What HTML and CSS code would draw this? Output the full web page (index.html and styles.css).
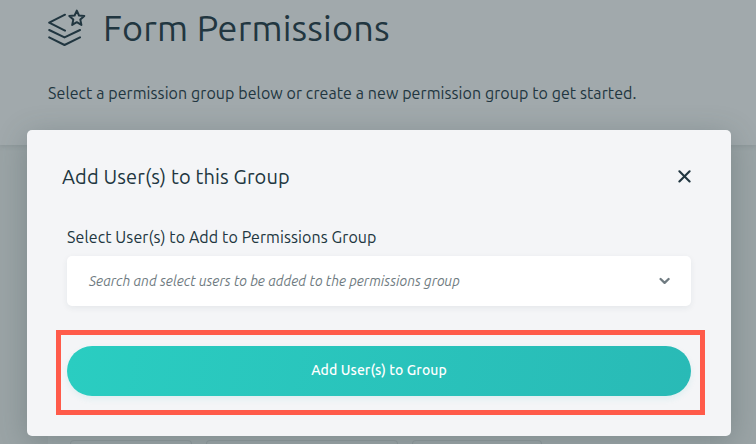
FILE: index.html
```
<!DOCTYPE html>
<html lang="en">
<head>
<meta charset="utf-8">
<title>Form Permissions</title>
<link rel="stylesheet" href="styles.css">
</head>
<body>
<div class="page">
  <header class="page-header">
    <div class="title-row">
      <svg class="title-icon" viewBox="0 0 38 38" fill="none" stroke="#213640" stroke-width="2" stroke-linecap="round" stroke-linejoin="round">
        <path d="M17 5.7 1.2 13.7 17 21.6"/>
        <path d="M1.2 21 16.5 28.4 32 21"/>
        <path d="M1.2 28.4 16.5 36 32 28.4"/>
        <path d="M28.8 1.6l2.2 4.9 5.3.5-4 3.6 1.1 5.3-4.6-2.7-4.6 2.7 1.1-5.3-4-3.6 5.3-.5z"/>
      </svg>
      <h1 class="title">Form Permissions</h1>
    </div>
    <p class="intro">Select a permission group below or create a new permission group to get started.</p>
  </header>
  <main class="page-body">
    <section class="card">
      <div class="chip chip-a"></div>
      <div class="chip chip-b"></div>
      <div class="chip chip-c"></div>
    </section>
  </main>
</div>
<div class="modal" role="dialog" aria-labelledby="modal-title">
  <div class="modal-head">
    <h2 class="modal-title" id="modal-title">Add User(s) to this Group</h2>
    <button class="close" aria-label="Close">
      <svg width="14" height="14" viewBox="0 0 14 14" fill="none" stroke="#213640" stroke-width="2.1" stroke-linecap="round"><path d="M2.4 2.3 12.6 12.5M12.6 2.3 2.4 12.5"/></svg>
    </button>
  </div>
  <div class="field">
    <label class="label">Select User(s) to Add to Permissions Group</label>
    <div class="select">
      <span class="placeholder">Search and select users to be added to the permissions group</span>
      <svg width="12" height="8" viewBox="0 0 12 8" fill="none" stroke="#6f7b81" stroke-width="2.3" stroke-linecap="round" stroke-linejoin="round"><path d="M1.6 2 5.6 5.9 9.6 2"/></svg>
    </div>
  </div>
  <div class="action">
    <button class="submit">Add User(s) to Group</button>
    <div class="highlight"></div>
  </div>
</div>
</body>
</html>
```
FILE: styles.css
```
* { box-sizing: border-box; }
body {
  margin: 0;
  height: 444px;
  overflow: hidden;
  position: relative;
  font-family: Ubuntu, "Noto Sans", sans-serif;
  color: #213640;
}
h1, h2, p { margin: 0; font-weight: 400; white-space: nowrap; }
button { border: 0; padding: 0; font-family: inherit; }
.page { height: 444px; display: flex; flex-direction: column; background: #9ba4a6; }
.page-header {
  height: 145px;
  flex: none;
  padding: 9px 48px 0;
  background: #a1a9ac;
  box-shadow: 0 1px 5px rgba(60, 80, 84, .18);
  z-index: 1;
}
.title-row { display: flex; align-items: center; height: 38px; gap: 17px; }
.title-icon { width: 38px; height: 38px; flex: none; }
.title { font-size: 36px; line-height: 38px; letter-spacing: .15px; }
.intro { margin-top: 34px; font-size: 16px; line-height: 24px; letter-spacing: .08px; }
.page-body { flex: 1; display: flex; padding: 36px 46px 0 48px; }
.card {
  flex: 1;
  padding: 259px 22px 0;
  display: flex;
  gap: 14px;
  background: #9fa8aa;
}
.chip {
  height: 4px;
  flex: none;
  border: 1px solid #939c9f;
  border-bottom: 0;
  border-radius: 4px 4px 0 0;
}
.chip-a { width: 122px; }
.chip-b { width: 192px; }
.chip-c { width: 130px; }
.modal {
  position: absolute;
  z-index: 2;
  left: 27px;
  top: 130px;
  width: 704px;
  height: 306px;
  padding: 32px 40px 40px;
  border-radius: 5px;
  background: #f4f5f7;
  box-shadow: 0 6px 30px rgba(50, 68, 73, .3);
}
.modal-head {
  display: flex;
  justify-content: space-between;
  align-items: center;
  height: 30px;
  margin-left: -5px;
}
.modal-title { font-size: 20px; line-height: 30px; letter-spacing: .13px; }
.close { width: 14px; height: 14px; margin-bottom: 2px; background: none; display: flex; }
.field { margin-top: 33px; }
.label { display: block; height: 31px; font-size: 16px; line-height: 24px; letter-spacing: .1px; white-space: nowrap; }
.select {
  height: 50px;
  padding: 0 20px 0 22px;
  display: flex;
  align-items: center;
  justify-content: space-between;
  border-radius: 5px;
  background: #fff;
  box-shadow: 0 2px 6px rgba(33, 54, 64, .07);
}
.placeholder { font-size: 14px; font-style: italic; color: #6f7b81; white-space: nowrap; }
.action { position: relative; margin-top: 40px; }
.submit {
  display: block;
  width: 100%;
  height: 50px;
  padding-bottom: 2px;
  border-radius: 25px;
  background: linear-gradient(100deg, #2acdc1, #29bab6);
  color: #fff;
  font-size: 14px;
  font-weight: 500;
  letter-spacing: .1px;
  box-shadow: 0 3px 6px rgba(42, 190, 184, .1);
}
.highlight {
  position: absolute;
  inset: -16px -13.5px -19px -11.5px;
  border: 5px solid #ff5b4a;
  pointer-events: none;
}
```
